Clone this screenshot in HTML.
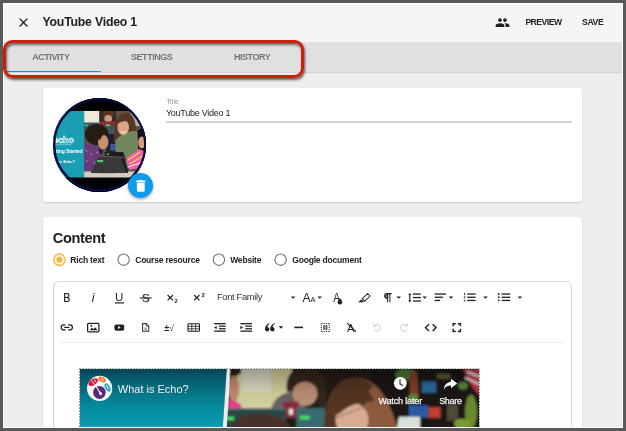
<!DOCTYPE html>
<html lang="en">
<head>
<meta charset="utf-8">
<title>YouTube Video 1</title>
<style>
html,body{margin:0;padding:0;}
body{width:626px;height:431px;overflow:hidden;background:#5a5a5a;position:relative;
  font-family:"Liberation Sans",sans-serif;color:#212121;}
.abs{position:absolute;}
#app{position:absolute;left:3px;top:3px;width:620px;height:425px;background:#eeeeee;overflow:hidden;}
/* everything inside #app is positioned in page coordinates through #page */
#page{position:absolute;left:-3px;top:-3px;width:626px;height:431px;will-change:transform;}
#hdr{left:3px;top:3px;width:620px;height:39px;background:#f5f5f5;}
#tabs{left:3px;top:42px;width:620px;height:30px;background:#e0e0e0;box-shadow:0 1px 1px rgba(0,0,0,.10);}
.t{position:absolute;white-space:nowrap;line-height:1;}
.tab{font-weight:bold;font-size:9px;letter-spacing:-0.45px;color:#757575;top:53px;}
.btn{font-weight:bold;font-size:8.6px;letter-spacing:-0.5px;color:#212121;top:17.7px;}
.card{position:absolute;background:#fff;border-radius:3px;box-shadow:0 1px 2px rgba(0,0,0,.14),0 0 1px rgba(0,0,0,.10);}
.rl{font-weight:bold;font-size:8.5px;letter-spacing:-0.2px;color:#212121;top:255.8px;}
#frameline{left:3px;top:3px;width:618px;height:423px;border:1px solid #fff;pointer-events:none;}
</style>
</head>
<body>
<div id="app"><div id="page">

  <!-- header -->
  <div id="hdr" class="abs"></div>
  <svg class="abs" style="left:16.1px;top:14.5px" width="15" height="15" viewBox="0 0 24 24"><path fill="#212121" d="M19 6.41L17.59 5 12 10.59 6.41 5 5 6.41 10.59 12 5 17.59 6.410 19 12 13.410 17.590 19 19 17.590 13.410 12z"/></svg>
  <div class="t" style="left:42.5px;top:16.2px;font-weight:bold;font-size:12.3px;letter-spacing:-0.22px;color:#212121">YouTube Video 1</div>
  <svg class="abs" style="left:495.1px;top:14.8px" width="15" height="15" viewBox="0 0 24 24"><path fill="#212121" d="M16 11c1.660 0 2.990-1.340 2.990-3S17.660 5 16 5c-1.660 0-3 1.340-3 3s1.340 3 3 3zm-8 0c1.660 0 2.990-1.340 2.990-3S9.660 5 8 5C6.340 5 5 6.340 5 8s1.340 3 3 3zm0 2c-2.330 0-7 1.170-7 3.500V19h14v-2.500c0-2.330-4.670-3.500-7-3.500zm8 0c-.290 0-.620.020-.970.050 1.160.840 1.970 1.970 1.970 3.450V19h6v-2.500c0-2.330-4.670-3.500-7-3.500z"/></svg>
  <div class="t btn" style="left:525.4px">PREVIEW</div>
  <div class="t btn" style="left:582px;letter-spacing:-0.35px">SAVE</div>

  <!-- tabs -->
  <div id="tabs" class="abs"></div>
  <div class="t tab" style="left:32.2px">ACTIVITY</div>
  <div class="t tab" style="left:131px">SETTINGS</div>
  <div class="t tab" style="left:233.9px">HISTORY</div>
  <div class="abs" style="left:3px;top:70.500px;width:98px;height:1.700px;background:#1294e6"></div>
  <!-- red annotation box -->

  <!-- card 1 -->
  <div class="card" style="left:43px;top:88px;width:539px;height:114px;"></div>
  <div class="abs" id="avatar" style="left:52.8px;top:98px;width:93.5px;height:93.5px;border-radius:50%;overflow:hidden;background:#000;">
    <svg width="93.5" height="93.5" viewBox="52.8 98 93.5 93.5" style="display:block">
      <defs>
        <filter id="b1" x="-20%" y="-20%" width="140%" height="140%"><feGaussianBlur stdDeviation="0.550"/></filter>
        <clipPath id="ph1"><rect x="84" y="110.8" width="70" height="66.9"/></clipPath>
      </defs>
      <rect x="40" y="98" width="120" height="94" fill="#000"/>
      <rect x="40" y="110.800" width="44.500" height="66.900" fill="#1a9fb2"/>
      <g clip-path="url(#ph1)"><g filter="url(#b1)">
        <rect x="80" y="108" width="80" height="72" fill="#5e5249"/>
        <rect x="82" y="108" width="20" height="15" fill="#f0ead8"/>
        <rect x="82" y="122.500" width="34" height="15" fill="#3e5660"/>
        <rect x="84.500" y="124.500" width="3" height="1.500" fill="#45d060"/>
        <rect x="130" y="108" width="22" height="18" fill="#aeada4"/>
        <rect x="99" y="108" width="17" height="14" fill="#3a2c28"/>
        <ellipse cx="108.300" cy="113.500" rx="5.600" ry="3.600" fill="#5e3322"/>
        <ellipse cx="108" cy="118.600" rx="3.900" ry="3.700" fill="#c79a80"/>
        <rect x="99.500" y="121.500" width="16" height="4.200" fill="#8a2a32"/>
        <rect x="105.500" y="124.300" width="4.500" height="1.700" fill="#45d060"/>
        <!-- mid background -->
        <rect x="106" y="134" width="12" height="20" fill="#23222c"/>
        <rect x="110" y="144" width="7" height="6.500" fill="#3a5a9c"/>
        <!-- woman -->
        <path d="M114 142c-1-14 1-27 10-29 9-1.500 13 9 12 28z" fill="#583826"/>
        <path d="M115 141c4-6 12-10 20-10l7 4 4 33h-30z" fill="#71875f"/>
        <ellipse cx="123" cy="127.500" rx="5.800" ry="7.800" fill="#d9a684"/>
        <path d="M117 124c1-5 4-7.500 7-7.500s5.500 2 5.500 6c-3-2-8-2-12.500 1.500z" fill="#583826"/>
        <path d="M120.500 131.500c1.500 1.300 3.500 1.300 5 0" stroke="#fff" stroke-width="1" fill="none"/>
        <!-- girl right -->
        <path d="M137.300 131c2-3 6-4 12-3v32h-11z" fill="#17110f"/>
        <ellipse cx="141.600" cy="142.500" rx="3.600" ry="6" fill="#d39e80"/>
        <path d="M126 158l13-9 7 3 4 14-21 4z" fill="#ee62a0"/>
        <path d="M128 160l12-8M129.500 164l13-8" stroke="#f3d568" stroke-width="1.300"/>
        <path d="M128 167l18-6" stroke="#fff" stroke-width="1"/>
        <!-- girl left -->
        <ellipse cx="96.500" cy="134.500" rx="11.800" ry="10.500" fill="#281b18"/>
        <ellipse cx="103" cy="142" rx="5.200" ry="7.300" fill="#c8906f"/>
        <path d="M96 138c2-5 6-7 10-5-2 1-5 3-6 7z" fill="#281b18"/>
        <path d="M82 146c6-3 14-2 18 2l4 8-3 16h-19z" fill="#6b3a7a"/>
        <path d="M85 150l2 2M90 154l2 1M86 160l2 2M93 162l2 2M96 152l2 1" stroke="#d57ac0" stroke-width="1"/>
        <path d="M98 148l5 3-2 4z" fill="#1c1a1c"/>
        <!-- table -->
        <rect x="80" y="171.500" width="80" height="8" fill="#d3ccc3"/>
        <rect x="98" y="171.500" width="17" height="1.800" fill="#b26a48"/>
        <!-- laptops -->
        <path d="M104 152h19l3 8h-20z" fill="#201f20"/>
        <path d="M90.500 173l8.500-17 26 1.500 3 15.500z" fill="#383737"/>
        <path d="M99 156l26 1.500" stroke="#6a6a6a" stroke-width="0.800"/>
        <path d="M122 158l5 14" stroke="#1a1a1a" stroke-width="2"/>
        <rect x="97" y="160" width="6" height="2.200" fill="#45d060"/>
        <rect x="106.500" y="153.500" width="2.500" height="1.300" fill="#45d060"/>
      </g></g>
      <rect x="40" y="177.700" width="120" height="16" fill="#000"/>
      <rect x="40" y="96" width="120" height="14.800" fill="#000"/>
      <text x="73.600" y="143" text-anchor="end" font-family="Liberation Sans, sans-serif" font-weight="bold" font-size="9" fill="#1a9fb2" stroke="#fff" stroke-width="0.600" letter-spacing="-0.100">echo</text>
      <rect x="54" y="144.300" width="17" height="0.800" fill="#fff" opacity="0.450"/>
      <text x="82.300" y="153.200" text-anchor="end" font-family="Liberation Sans, sans-serif" font-weight="bold" font-size="5" letter-spacing="-0.100" fill="#fff">Getting Started</text>
      <text x="74.800" y="162.700" text-anchor="end" font-family="Liberation Sans, sans-serif" font-weight="bold" font-size="3.800" fill="#fff">What is Echo?</text>
      <circle cx="99.550" cy="144.750" r="45.600" fill="none" stroke="#0b0b48" stroke-width="2.400"/>
    </svg>
  </div>
  <!-- trash button -->
  <div class="abs" style="left:128.300px;top:173px;width:25px;height:25px;border-radius:50%;background:#0e9bea;box-shadow:0 1px 3px rgba(0,0,0,.30),0 2px 5px rgba(0,0,0,.12);"></div>
  <svg class="abs" style="left:132.900px;top:178.100px" width="15.600" height="15.600" viewBox="0 0 24 24"><path fill="#fff" d="M6 19c0 1.100.9 2 2 2h8c1.100 0 2-.9 2-2V7H6v12zM19 4h-3.500l-1-1h-5l-1 1H5v2h14V4z"/></svg>

  <div class="t" style="left:166.200px;top:98.600px;font-size:6.800px;color:#929292;">Title</div>
  <div class="t" style="left:165.900px;top:109.100px;font-size:9px;letter-spacing:-0.250px;color:#212121;">YouTube Video 1</div>
  <div class="abs" style="left:166px;top:121.200px;width:406px;height:1.600px;background:#d2d2d2"></div>

  <!-- card 2 -->
  <div class="card" style="left:43px;top:217px;width:539px;height:240px;"></div>
  <div class="t" style="left:52.700px;top:230.800px;font-weight:bold;font-size:14.600px;letter-spacing:-0.350px;color:#212121;">Content</div>

  <svg class="abs" style="left:0;top:0" width="626" height="431" viewBox="0 0 626 431">
    <circle cx="59.450" cy="259.700" r="5.700" fill="none" stroke="#ffb341" stroke-width="1.500"/>
    <circle cx="59.450" cy="259.700" r="3.150" fill="#ffb341"/>
    <circle cx="123.600" cy="259.700" r="5.700" fill="none" stroke="#6e6e6e" stroke-width="1.100"/>
    <circle cx="218.900" cy="259.700" r="5.700" fill="none" stroke="#6e6e6e" stroke-width="1.100"/>
    <circle cx="280.600" cy="259.700" r="5.700" fill="none" stroke="#6e6e6e" stroke-width="1.100"/>
  </svg>
  <div class="t rl" style="left:70.300px">Rich text</div>
  <div class="t rl" style="left:135.200px">Course resource</div>
  <div class="t rl" style="left:230.200px">Website</div>
  <div class="t rl" style="left:292.300px">Google document</div>

  <!-- editor box -->
  <div class="abs" style="left:53px;top:281px;width:517px;height:200px;border:1px solid #cfcfcf;border-top-color:#dedede;border-right-color:#dadada;border-radius:6px;background:#fff;"></div>
  <div class="abs" style="left:59px;top:341.600px;width:506px;height:1px;background:#f0f0f0"></div>

  <!--TOOLBAR-->
  <svg class="abs" style="left:0;top:0" width="626" height="431" viewBox="0 0 626 431" font-family="Liberation Sans, sans-serif" fill="#222">
    <!-- row 1 -->
    <text x="0" y="0" font-size="12.400" fill="#222" stroke="#222" stroke-width="0.250" transform="translate(63.200 301.800) scale(0.850 1)">B</text>
    <text x="91.700" y="301.900" font-size="12.200" font-style="italic" fill="#222">i</text>
    <text x="115" y="301.300" font-size="11.500" fill="#222">U</text>
    <rect x="115" y="302.300" width="9" height="1.200"/>
    <text x="142.100" y="302" font-size="11.500" fill="#333" stroke="#333" stroke-width="0.250">S</text>
    <rect x="139.900" y="297.350" width="11.800" height="1.200" fill="#333"/>
    <g stroke="#222" stroke-width="1.150" fill="none"><path d="M167.600 295l5.400 5.400M173 295l-5.400 5.400"/><path d="M194.100 295l5.400 5.400M199.500 295l-5.400 5.400"/></g>
    <text x="174.500" y="303" font-size="5.800" font-weight="bold">2</text>
    <text x="201.600" y="296.500" font-size="5.800" font-weight="bold">2</text>
    <text x="216.900" y="300.400" font-size="9.300" letter-spacing="-0.300" fill="#333">Font Family</text>
    <path d="M290.800 296.400h4.600l-2.300 2.300z"/>
    <text x="302.400" y="302" font-size="12.200" fill="#222">A</text>
    <text x="310.500" y="302" font-size="7.400" fill="#222">A</text>
    <path d="M317.400 296.400h4.600l-2.300 2.300z"/>
    <text x="0" y="0" font-size="12.200" fill="#222" transform="translate(333.200 302) scale(0.840 1)">A</text>
    <path d="M339.900 298.100c1.400 1.800 2.250 3 2.250 4.100a2.250 2.250 0 0 1-4.500 0c0-1.100.85-2.300 2.250-4.100z"/>
    <!-- highlighter -->
    <g fill="none" stroke="#222" stroke-width="1.050" stroke-linejoin="round"><path d="M362.300 298.700l5.300-5.200 2.500 2.500-5.300 5.200z"/><path d="M361.400 299.700l2.300 2.300h-5z" fill="#222" stroke-width="0.600"/></g>
    <!-- pilcrow -->
    <g fill="none" stroke="#222" stroke-width="1.050"><path d="M387 293.600h4.600M387.600 293.600v8.700M389.900 293.600v8.700"/><path d="M387.600 293.600h-.6a2.300 2.300 0 0 0 0 4.600h.6z" fill="#777"/></g>
    <path d="M396.400 296.400h4.600l-2.300 2.300z"/>
    <!-- line height -->
    <g><path d="M409.800 292.900l1.600 2.200h-1.050v5.200h1.050l-1.600 2.200-1.600-2.200h1.050v-5.200h-1.050z"/><rect x="412.800" y="293.400" width="8.100" height="1.300"/><rect x="412.800" y="296.900" width="8.100" height="1.300"/><rect x="412.800" y="300.400" width="8.100" height="1.300"/></g>
    <path d="M422.400 296.400h4.600l-2.300 2.300z"/>
    <!-- align -->
    <rect x="434.600" y="293.400" width="11.400" height="1.300"/><rect x="434.600" y="296.600" width="8.400" height="1.300"/><rect x="434.600" y="299.800" width="5.400" height="1.300"/>
    <path d="M448.700 296.400h4.600l-2.300 2.300z"/>
    <!-- ordered list -->
    <g><rect x="467.200" y="293.400" width="8.400" height="1.300"/><rect x="467.200" y="296.600" width="8.400" height="1.300"/><rect x="467.200" y="299.800" width="8.400" height="1.300"/>
    <rect x="464" y="292.900" width="1.100" height="2.300" fill="#444"/><rect x="463.800" y="296.200" width="1.600" height="2" fill="#666"/><rect x="463.800" y="299.500" width="1.600" height="2" fill="#666"/></g>
    <path d="M483.200 296.400h4.600l-2.300 2.300z"/>
    <!-- unordered list -->
    <g><rect x="501.600" y="293.400" width="8.600" height="1.300"/><rect x="501.600" y="296.600" width="8.600" height="1.300"/><rect x="501.600" y="299.800" width="8.600" height="1.300"/>
    <circle cx="498.700" cy="294" r="0.900"/><circle cx="498.700" cy="297.200" r="0.900"/><circle cx="498.700" cy="300.400" r="0.900"/></g>
    <path d="M517.600 296.400h4.600l-2.300 2.300z"/>

    <!-- row 2 -->
    <!-- link -->
    <g fill="none" stroke="#222" stroke-width="1.300"><path d="M65.500 324.900h-1.800a2.500 2.500 0 0 0 0 5h1.800M68.100 324.900h1.800a2.500 2.500 0 0 1 0 5h-1.800M64.200 327.400h5.200"/></g>
    <!-- image -->
    <rect x="87.600" y="323.400" width="11.300" height="8.400" rx="1" fill="none" stroke="#222" stroke-width="1.250"/>
    <path d="M89.800 330.200l2.200-2.700 1.500 1.700 1.600-2 2.400 3zM91.200 325a.9.900 0 1 0 .01 0z"/>
    <!-- video -->
    <rect x="114.400" y="324.400" width="9.800" height="6.300" rx="1.900"/>
    <path d="M118.200 326.100v3l2.500-1.500z" fill="#fff"/>
    <!-- file -->
    <g fill="none" stroke="#333" stroke-width="1.050" stroke-linejoin="round"><path d="M142.600 323.600h3.800l2.400 2.400v5.300h-6.200z"/><path d="M146.300 323.700v2.400h2.400" stroke-width="0.800"/><path d="M144.300 328.200h2.800M144.300 329.700h2.800" stroke-width="0.700" stroke="#555"/></g>
    <!-- math -->
    <text x="164.300" y="331" font-size="9" fill="#222" font-weight="bold">±</text><text x="169" y="331" font-size="9" fill="#555">√</text>
    <!-- table -->
    <g fill="none" stroke="#222" stroke-width="0.800"><rect x="187.950" y="323.700" width="11.500" height="7.600" rx="0.800" stroke-width="1.100"/><path d="M188 326.300h11.500M188 328.800h11.500M191.800 323.700v7.600M195.600 323.700v7.600"/></g>
    <!-- outdent -->
    <g><rect x="214.100" y="323" width="11.600" height="1.300"/><rect x="214.100" y="330.500" width="11.600" height="1.300"/><rect x="219" y="325.550" width="6.700" height="1.250"/><rect x="219" y="328.100" width="6.700" height="1.250"/><path d="M216.700 325.700v3.500l-2.600-1.750z"/></g>
    <!-- indent -->
    <g><rect x="240.400" y="323" width="11.600" height="1.300"/><rect x="240.400" y="330.500" width="11.600" height="1.300"/><rect x="245.300" y="325.550" width="6.700" height="1.250"/><rect x="245.300" y="328.100" width="6.700" height="1.250"/><path d="M240.400 325.700v3.500l2.600-1.750z"/></g>
    <!-- quote -->
    <path d="M269.200 323c-2.700 1.500-4.300 3.700-4.300 6.300a2.250 2.250 0 1 0 2.500-2.300c.1-1.200.9-2.300 2.200-3.300zM274.400 323c-2.700 1.500-4.300 3.700-4.300 6.300a2.250 2.250 0 1 0 2.500-2.300c.1-1.200.9-2.300 2.200-3.300z"/>
    <path d="M278.800 326.200h4.400l-2.200 2.500z"/>
    <!-- hr -->
    <rect x="294.300" y="326.600" width="8.700" height="1.600"/>
    <!-- select all -->
    <rect x="321.300" y="323.500" width="8" height="8" fill="none" stroke="#222" stroke-width="1.100" stroke-dasharray="1.140 1.140"/>
    <rect x="323.700" y="325.900" width="3.200" height="3.200" fill="#aaa" stroke="#333" stroke-width="0.900"/>
    <!-- clear formatting -->
    <text x="347.100" y="331.800" font-size="11.200" fill="#222">A</text>
    <path d="M347 323.100l9 8.600" stroke="#222" stroke-width="1.050" fill="none"/>
    <!-- undo / redo -->
    <g fill="none" stroke="#d6d6d6" stroke-width="1.100"><path d="M374.700 325.300a3.400 3.400 0 1 1-.3 4.600"/><path d="M373.600 323.300v2.800h2.800" /></g>
    <g fill="none" stroke="#d6d6d6" stroke-width="1.100"><path d="M406.300 325.300a3.400 3.400 0 1 0 .3 4.600"/><path d="M407.400 323.300v2.800h-2.800"/></g>
    <!-- code -->
    <g fill="none" stroke="#222" stroke-width="1.400"><path d="M429 324.300l-3.500 3.300 3.500 3.300M432.600 324.300l3.500 3.300-3.500 3.300"/></g>
    <!-- fullscreen -->
    <g fill="none" stroke="#222" stroke-width="1.500"><path d="M453.200 326.300v-2.600h2.600M457.800 323.700h2.600v2.600M460.400 328.800v2.600h-2.600M455.800 331.400h-2.600v-2.600"/></g>
  </svg>
  <!--/TOOLBAR-->

  <!--VIDEO-->
  <div class="abs" style="left:80px;top:369.300px;width:399px;height:70px;overflow:hidden;background:#111;">
    <svg width="399" height="70" viewBox="80 369.300 399 70" style="display:block" font-family="Liberation Sans, sans-serif">
      <defs>
        <filter id="b2" x="-10%" y="-30%" width="120%" height="160%"><feGaussianBlur stdDeviation="1.100"/></filter>
        <linearGradient id="tg" gradientUnits="userSpaceOnUse" x1="0" y1="368.800" x2="0" y2="428"><stop offset="0" stop-color="#02424e"/><stop offset="0.120" stop-color="#045665"/><stop offset="0.350" stop-color="#056e7f"/><stop offset="0.650" stop-color="#088a9e"/><stop offset="1" stop-color="#0a9db3"/></linearGradient>
        <linearGradient id="dg" x1="0" y1="0" x2="0" y2="1"><stop offset="0" stop-color="#000" stop-opacity="0.300"/><stop offset="0.600" stop-color="#000" stop-opacity="0.060"/><stop offset="1" stop-color="#000" stop-opacity="0"/></linearGradient>
        <clipPath id="ph2"><path d="M229.500 368h252v72H224.500z"/></clipPath>
      </defs>
      <!-- photo -->
      <g clip-path="url(#ph2)"><g filter="url(#b2)">
        <rect x="215" y="360" width="275" height="85" fill="#231d18"/>
        <!-- wall -->
        <rect x="236" y="360" width="56" height="50" fill="#d6d19e"/>
        <rect x="242" y="364" width="29" height="28" fill="#dcdcc6"/>
        <!-- left girl -->
        <path d="M226 360h15v14c-4 0-7 4-8 18h-7z" fill="#2e1d1a"/>
        <ellipse cx="233.500" cy="389" rx="5.600" ry="13" fill="#c28a72"/>
        <path d="M226 402c5-2 11-1 15 3l1 5h-16z" fill="#e63f8a"/>
        <!-- boy -->
        <path d="M271 409c3-10 10-15 20-17l14 4v14z" fill="#6c6262"/>
        <path d="M287 392c-2-14 4-24 17-25 14-1 22 8 22 22v18h-7l-2-16z" fill="#36251e"/>
        <ellipse cx="305" cy="394" rx="12.500" ry="12" fill="#bf9078"/>
        <path d="M290 388c4-9 14-13 28-8l-1-8-20-3z" fill="#36251e"/>
        <path d="M283 402h16v16h-16z" fill="#8a2a3c"/>
        <rect x="289" y="409" width="4" height="6" fill="#e8dede"/>
        <!-- laptops -->
        <path d="M226 408.500h60v30h-60z" fill="#2a4646"/>
        <path d="M226 408.500h60v1.500h-60z" fill="#5a7474"/>
        <path d="M296.400 408.300h28.500v30h-28.500z" fill="#386a70"/>
        <rect x="227.300" y="417" width="6.700" height="3.500" fill="#44e060"/>
        <rect x="300" y="416" width="9.700" height="3.700" fill="#44e060"/>
        <!-- hair foreground left -->
        <path d="M228 432c4-12 16-18 32-18s28 6 33 18z" fill="#47332a"/>
        <!-- background right -->
        <rect x="372" y="360" width="115" height="80" fill="#1b1913"/>
        <ellipse cx="406" cy="375" rx="11" ry="6" fill="#4a7a34"/>
        <path d="M409 372h8l2 26h-9z" fill="#84402c"/>
        <ellipse cx="413" cy="398" rx="5" ry="4" fill="#5c8c3a"/>
        <rect x="421.800" y="381.700" width="14.500" height="11.300" fill="#2a6a9c"/>
        <rect x="437" y="374" width="13" height="5" fill="#5c5a30"/>
        <rect x="409" y="405.500" width="19" height="12.500" fill="#2b5aa2"/>
        <rect x="428.500" y="407.600" width="12" height="10.500" fill="#c2402e"/>
        <rect x="447" y="405" width="11" height="16" fill="#4e4c38"/>
        <ellipse cx="471" cy="412" rx="6" ry="17" fill="#6a8a2e"/><ellipse cx="462" cy="424" rx="8" ry="5" fill="#7a9a34"/>
        <ellipse cx="463" cy="386" rx="5" ry="4" fill="#5a843e"/>
        <path d="M463 369h18v28l-9-10z" fill="#c63a4a"/>
        <path d="M467 372l13 5M465 378l15 7" stroke="#eee" stroke-width="2"/>
        <!-- woman -->
        <path d="M324 440c-1-34 6-60 30-62 24-1 38 24 46 62z" fill="#8c5a3c"/>
        <path d="M324 440c-1-34 6-60 30-62 8 0 14 3 19 8-8 8-12 30-10 54z" fill="#573524"/>
        <ellipse cx="352" cy="420" rx="16.500" ry="17" fill="#d9ab92"/>
        <path d="M333 414c2-16 12-26 24-26 10 0 15 6 17 14-10 0-22 2-30 8-4 3-7 7-11 4z" fill="#573524"/>
        <path d="M336 418c8-4 18-6 30-12" stroke="#8a7a70" stroke-width="1.200" fill="none"/>
        <path d="M399 417h21v24h-26z" fill="#d8e0d8"/>
        <ellipse cx="438" cy="431" rx="17" ry="8" fill="#201714"/>
      </g></g>
      <!-- teal panel -->
      <path d="M70 360h157.500l-5.300 80H70z" fill="url(#tg)"/>
      <path d="M228.900 368l-4.300 62" stroke="#ececec" stroke-width="4"/>
      <!-- top dark gradient -->
      <rect x="229" y="368.800" width="252" height="40" fill="url(#dg)"/>
      <!-- channel logo -->
      <circle cx="99.600" cy="388.700" r="12.600" fill="#fff"/>
      <g>
        <ellipse cx="99.400" cy="392.700" rx="6.300" ry="6.500" fill="#5a2878"/>
        <path d="M96.700 387.600l3.400 5.600" stroke="#fff" stroke-width="1.100" stroke-linecap="round"/>
        <ellipse cx="100.500" cy="393.800" rx="1.300" ry="1.800" fill="#fff" transform="rotate(-30 100.500 393.800)"/>
        <ellipse cx="93.200" cy="382.500" rx="5.400" ry="3.100" fill="#d9183c" transform="rotate(-32 93.200 382.500)"/>
        <path d="M91.800 381.200l2.200 3.200M94.600 380l1.400 2.400" stroke="#fff" stroke-width="0.900" stroke-linecap="round"/>
        <ellipse cx="102" cy="379.800" rx="4" ry="2.400" fill="#f07a3e" transform="rotate(25 102 379.800)"/>
        <path d="M101 379l2.600 1.600" stroke="#fff" stroke-width="0.900" stroke-linecap="round"/>
        <ellipse cx="107.600" cy="387.800" rx="2.400" ry="4.500" fill="#2aa7c0" transform="rotate(-30 107.600 387.800)"/>
        <path d="M106.500 385.600l1.800 3.600" stroke="#fff" stroke-width="0.900" stroke-linecap="round"/>
      </g>
      <text x="117.800" y="393.500" font-size="11" fill="#f1f1f1">What is Echo?</text>
      <!-- watch later -->
      <circle cx="400.300" cy="383.600" r="6.400" fill="#fff"/>
      <path d="M400 379.600v4.600l3 1.800" fill="none" stroke="#444" stroke-width="1.300"/>
      <text x="378.400" y="404" font-size="9" letter-spacing="-0.140" fill="#f6f6f6" stroke="#f6f6f6" stroke-width="0.250" style="paint-order:stroke">Watch later</text>
      <!-- share -->
      <path d="M451 379l6.200 4.800-6.200 4.800v-2.900c-3.600 0-5.900 1.300-7.300 4.300.4-4.300 2.800-7.400 7.300-8z" fill="#fff"/>
      <text x="439.200" y="404" font-size="9" letter-spacing="-0.330" fill="#f6f6f6" stroke="#f6f6f6" stroke-width="0.250" style="paint-order:stroke">Share</text>
    </svg>
  </div>
  <svg class="abs" style="left:0;top:0" width="626" height="431" viewBox="0 0 626 431"><rect x="79.500" y="368.800" width="400" height="70" fill="none" stroke="#4a5a5e" stroke-opacity="0.800" stroke-width="1" stroke-dasharray="1.500 1.500"/></svg>
  <!--/VIDEO-->

  <div id="frameline" class="abs"></div>
  <div class="abs" style="left:3px;top:39.8px;width:294.6px;height:31.9px;border:3.2px solid #d11c08;border-radius:9.5px;box-shadow:1px 2px 2.5px rgba(0,0,0,.60), inset 1px 2px 2.5px rgba(0,0,0,.55);"></div>
</div></div>
</body>
</html>
